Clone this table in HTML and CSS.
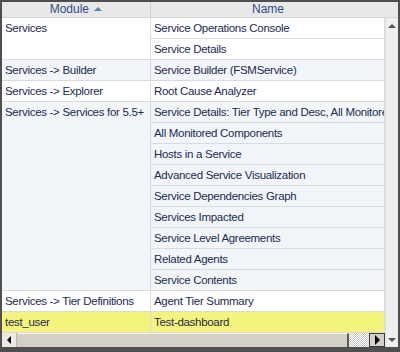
FILE: index.html
```html
<!DOCTYPE html>
<html lang="en">
<head>
    <meta charset="UTF-8">
    <title>Module Grid</title>
    <link rel="stylesheet" href="styles.css">
</head>
<body>
    <div class="frame">
        <div class="grid-header">
            <div class="head-cell head-module">Module <span class="sort-arrow"></span></div>
            <div class="head-cell head-name">Name</div>
            <div class="head-spacer"></div>
        </div>
        <div class="grid-main">
            <div class="grid-left">
                <div class="grid-body">
                    <table class="grid">
                        <tr class="grp-a">
                            <td class="mod" rowspan="2">Services</td>
                            <td>Service Operations Console</td>
                        </tr>
                        <tr class="grp-a"><td>Service Details</td></tr>
                        <tr class="grp-b">
                            <td class="mod">Services -&gt; Builder</td>
                            <td>Service Builder (FSMService)</td>
                        </tr>
                        <tr class="grp-a">
                            <td class="mod">Services -&gt; Explorer</td>
                            <td>Root Cause Analyzer</td>
                        </tr>
                        <tr class="grp-b">
                            <td class="mod" rowspan="9">Services -&gt; Services for 5.5+</td>
                            <td>Service Details: Tier Type and Desc, All Monitored Components</td>
                        </tr>
                        <tr class="grp-b"><td>All Monitored Components</td></tr>
                        <tr class="grp-b"><td>Hosts in a Service</td></tr>
                        <tr class="grp-b"><td>Advanced Service Visualization</td></tr>
                        <tr class="grp-b"><td>Service Dependencies Graph</td></tr>
                        <tr class="grp-b"><td>Services Impacted</td></tr>
                        <tr class="grp-b"><td>Service Level Agreements</td></tr>
                        <tr class="grp-b"><td>Related Agents</td></tr>
                        <tr class="grp-b"><td>Service Contents</td></tr>
                        <tr class="grp-a">
                            <td class="mod">Services -&gt; Tier Definitions</td>
                            <td>Agent Tier Summary</td>
                        </tr>
                        <tr class="selected">
                            <td class="mod">test_user</td>
                            <td>Test-dashboard</td>
                        </tr>
                    </table>
                </div>
                <div class="hscroll">
                    <div class="hbtn hbtn-left"><span class="tri-left"></span></div>
                    <div class="hthumb"></div>
                    <div class="htrack"></div>
                    <div class="hbtn hbtn-right"><span class="tri-right"></span></div>
                </div>
            </div>
            <div class="vscroll">
                <span class="tri-up"></span>
                <span class="tri-down"></span>
            </div>
        </div>
    </div>
</body>
</html>
```

FILE: styles.css
```css
html, body {
    margin: 0;
    padding: 0;
    background: #4a4a4a;
}
.frame {
    width: 396px;
    height: 345px;
    padding: 2px 2px 5px 2px;
    background: #4f4f4f;
    font-family: 'Liberation Sans', Arial, sans-serif;
    font-size: 11px;
    color: #1b2a52;
}
.grid-header {
    display: flex;
    height: 15px;
    background: #e8e8e8;
    border-bottom: 1px solid #d6d6d6;
}
.head-cell {
    color: #2f4b8c;
    text-align: center;
    line-height: 15px;
    font-size: 12px;
}
.head-module {
    width: 148px;
    border-right: 1px solid #d2d2d2;
}
.head-name {
    width: 234px;
}
.head-spacer {
    flex: 1;
}
.sort-arrow {
    display: inline-block;
    width: 0;
    height: 0;
    margin-left: 2px;
    vertical-align: 2px;
    border-left: 4px solid transparent;
    border-right: 4px solid transparent;
    border-bottom: 4px solid #6a7fa6;
}
.grid-main {
    display: flex;
    height: 329px;
}
.grid-left {
    width: 383px;
    display: flex;
    flex-direction: column;
}
.grid-body {
    height: 315px;
    overflow: hidden;
    background: #ffffff;
}
.grid {
    border-collapse: collapse;
    table-layout: fixed;
    width: 383px;
}
.grid td {
    height: 20px;
    padding: 0 0 0 3px;
    border-bottom: 1px solid #dadada;
    border-right: 1px solid #dadada;
    white-space: nowrap;
    overflow: hidden;
    vertical-align: middle;
    line-height: 20px;
    font-size: 11.5px;
    letter-spacing: -0.3px;
}
.grid td.mod {
    width: 145px;
    vertical-align: top;
}
.grp-a td {
    background: #ffffff;
}
.grp-b td {
    background: #f2f6fb;
}
.selected td {
    background: #f4f47c;
}
.hscroll {
    display: flex;
    height: 14px;
    background: #d4d0c8;
}
.hbtn {
    width: 14px;
    display: flex;
    align-items: center;
    justify-content: center;
    background: #ece9e3;
}
.hbtn-left {
    border-right: 1px solid #bdb9b1;
}
.hbtn-right {
    box-sizing: border-box;
    width: 16px;
    border: 1px solid #3c3c3c;
    background: #d4d0c8;
}
.hthumb {
    width: 329px;
    margin-left: 1px;
    border-top: 1px solid #f4f4f4;
    border-right: 2px solid #5a5a5a;
    background: #d4d0c8;
}
.htrack {
    flex: 1;
    background-color: #ffffff;
    background-image:
        linear-gradient(45deg, #c8c8c8 25%, transparent 25%, transparent 75%, #c8c8c8 75%),
        linear-gradient(45deg, #c8c8c8 25%, transparent 25%, transparent 75%, #c8c8c8 75%);
    background-size: 2px 2px;
    background-position: 0 0, 1px 1px;
}
.tri-left {
    width: 0;
    height: 0;
    border-top: 4px solid transparent;
    border-bottom: 4px solid transparent;
    border-right: 4px solid #000000;
}
.tri-right {
    width: 0;
    height: 0;
    border-top: 5px solid transparent;
    border-bottom: 5px solid transparent;
    border-left: 5px solid #000000;
}
.vscroll {
    flex: 1;
    display: flex;
    flex-direction: column;
    justify-content: space-between;
    align-items: center;
    padding: 6px 0 5px 0;
    background: #efefef;
    border-left: 1px solid #e0e0e0;
}
.tri-up {
    width: 0;
    height: 0;
    border-left: 4px solid transparent;
    border-right: 4px solid transparent;
    border-bottom: 4px solid #555555;
}
.tri-down {
    width: 0;
    height: 0;
    border-left: 4px solid transparent;
    border-right: 4px solid transparent;
    border-top: 4px solid #555555;
}
```
